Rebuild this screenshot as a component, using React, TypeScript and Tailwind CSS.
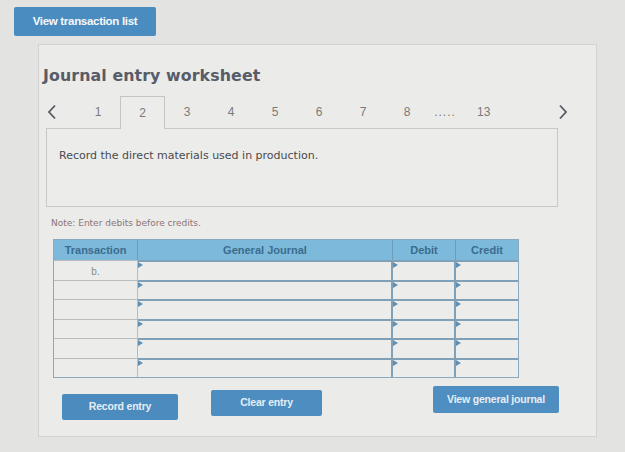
import React from 'react';

const tabs = ['1', '2', '3', '4', '5', '6', '7', '8'];
const rows = ['b.', '', '', '', '', ''];

function Tri() {
  return (
    <span className="absolute left-0 top-0 h-0 w-0 border-y-[3px] border-l-[5px] border-y-transparent border-l-[#5f8fb3]" />
  );
}

function Chevron({ left }: { left?: boolean }) {
  return (
    <svg width="10" height="16" viewBox="0 0 10 16" fill="none" stroke="#555a60" strokeWidth="1.8">
      <path d={left ? 'M8 1.5 L2 8 L8 14.5' : 'M2 1.5 L8 8 L2 14.5'} />
    </svg>
  );
}

export default function App() {
  return (
    <div className="h-[452px] w-[625px] overflow-hidden bg-[#e3e3e1] font-['Liberation_Sans',Arial,sans-serif]">
      <div className="pl-[14px] pt-[7px]">
        <button className="h-[29px] w-[142px] rounded-[2px] bg-[#4b8cc0] text-[11.5px] font-bold tracking-[-0.3px] text-[#f4f8fb]">
          View transaction list
        </button>
      </div>

      <div className="ml-[38px] mt-[8px] h-[393px] w-[559px] border border-[#d2d2d0] bg-[#ebebe9] pl-[4px]">
        <h1 className="mt-[19px] font-['DejaVu_Sans',Verdana,sans-serif] text-[15.8px] font-bold tracking-[0.1px] text-[#575c68]">
          Journal entry worksheet
        </h1>

        {/* tab strip */}
        <div className="mt-[8px] flex h-[32px] items-center text-[12px] text-[#7a7a7a]">
          <span className="ml-[4px] w-[20px]"><Chevron left /></span>
          <div className="ml-[9px] flex h-full">
            {tabs.map((t) => (
              <div
                key={t}
                className={
                  t === '2'
                    ? 'relative z-10 -mb-px flex h-[33px] w-[45px] items-center justify-center border border-b-0 border-[#c4c4c4] bg-[#ececea]'
                    : 'flex h-full w-[44px] items-center justify-center'
                }
              >
                {t}
              </div>
            ))}
            <span className="flex w-[32px] items-center justify-center tracking-[1px]">.....</span>
            <span className="ml-[16px] flex items-center">13</span>
          </div>
          <span className="ml-[68px]"><Chevron /></span>
        </div>

        <div className="ml-[3px] h-[79px] w-[512px] border border-[#c8c8c6] bg-[#ececea] pl-[12px] pt-[19px] font-['DejaVu_Sans',Verdana,sans-serif] text-[11px] text-[#4a4a4a]">
          Record the direct materials used in production.
        </div>

        <p className="ml-[8px] mt-[10px] font-['DejaVu_Sans',Verdana,sans-serif] text-[9px] text-[#8c7474]">
          Note: Enter debits before credits.
        </p>

        {/* journal table */}
        <div className="ml-[10px] mt-[9px] w-[466px] border border-[#8aa9bf]">
          <div className="flex h-[20px] bg-[#7cb9da] text-[11px] font-bold text-[#3b6c8e]">
            <div className="flex w-[84px] items-center justify-center border-r border-[#6d9dbb]">Transaction</div>
            <div className="flex w-[255px] items-center justify-center border-r border-[#6d9dbb]">General Journal</div>
            <div className="flex w-[63px] items-center justify-center border-r border-[#6d9dbb]">Debit</div>
            <div className="flex flex-1 items-center justify-center">Credit</div>
          </div>
          {rows.map((r, i) => (
            <div key={i} className="flex h-[19.5px] bg-[#ecedeb]">
              <div className="flex w-[84px] items-start justify-center border-r border-t border-[#b9bcbd] pt-[3px] text-[10px] text-[#8a8a8a]">
                {r}
              </div>
              <div className="relative w-[255px] border-r-2 border-t-2 border-[#7fa0b6]">
                <Tri />
              </div>
              <div className="relative w-[63px] border-r-2 border-t-2 border-[#7fa0b6]">
                <Tri />
              </div>
              <div className="relative flex-1 border-t-2 border-[#7fa0b6]">
                <Tri />
              </div>
            </div>
          ))}
        </div>

        <div className="mt-[12px] flex items-start text-[10.5px] font-bold tracking-[-0.2px] text-[#e6eef5]">
          <button className="ml-[19px] mt-[4px] h-[26px] w-[116px] rounded-[2px] bg-[#4c8bbd]">Record entry</button>
          <button className="ml-[33px] h-[26px] w-[111px] rounded-[2px] bg-[#4d8dc0]">Clear entry</button>
          <button className="ml-[111px] -mt-[4px] h-[27px] w-[126px] rounded-[2px] bg-[#4e8ec1]">View general journal</button>
        </div>
      </div>
    </div>
  );
}
